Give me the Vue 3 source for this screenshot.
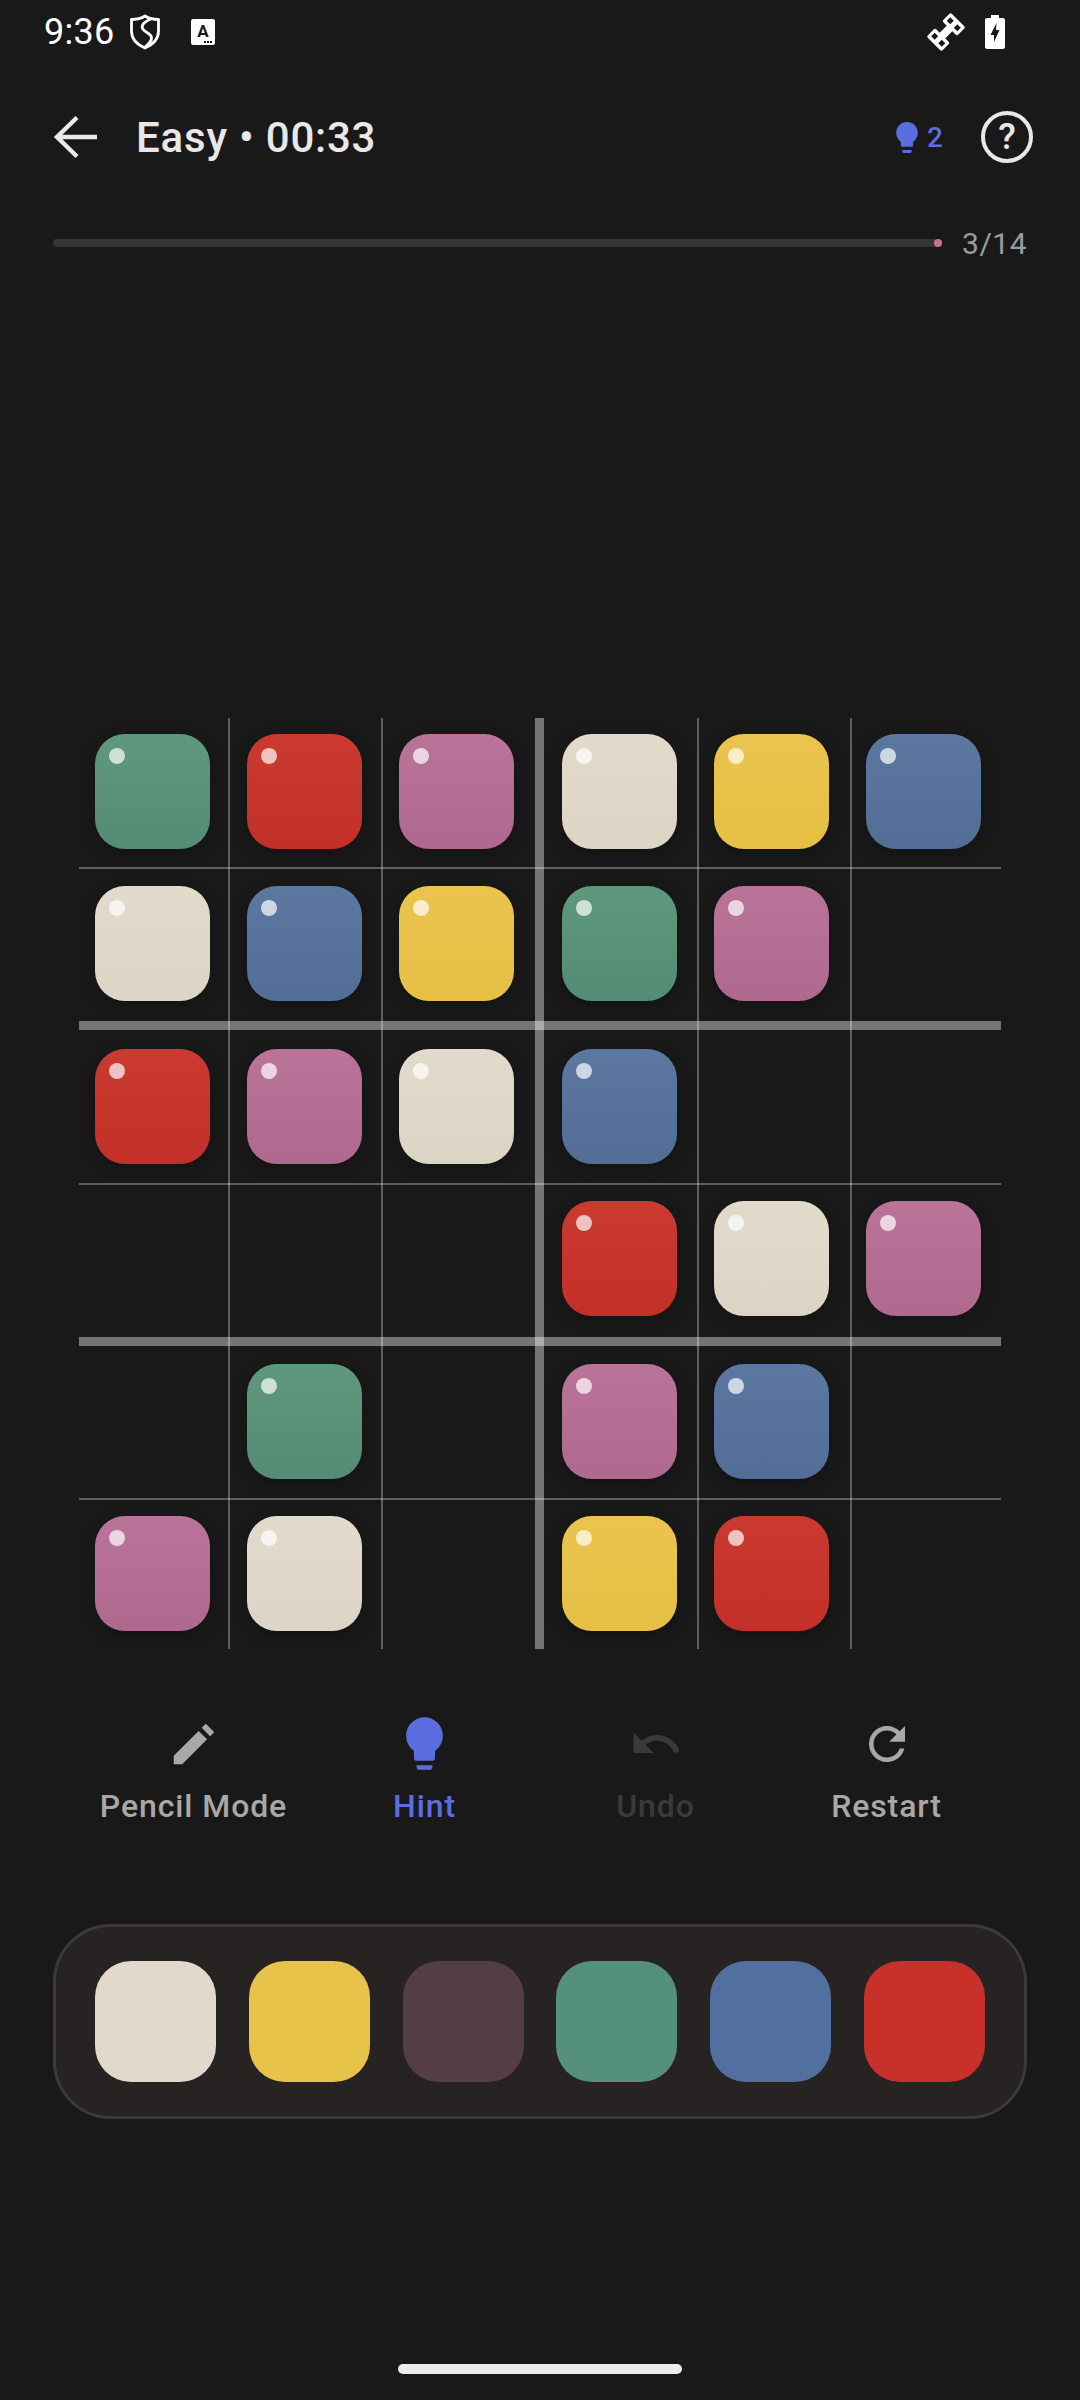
<script setup>
const colors = { G: 'green', R: 'red', P: 'pink', C: 'cream', Y: 'yellow', B: 'blue' }
const board = ['GRPCYB', 'CBYGP_', 'RPCB__', '___RCP', '_G_PB_', 'PC_YR_']
const colOffset = [16, 17, 16, 18, 15, 14]
const rowOffset = [16, 17, 19, 16, 18, 16]
const tiles = []
board.forEach((row, r) => {
  row.split('').forEach((c, k) => {
    if (c !== '_') {
      tiles.push({
        id: r + '-' + k,
        color: colors[c],
        style: {
          gridColumn: k * 2 + 1,
          gridRow: r * 2 + 1,
          marginLeft: colOffset[k] + 'px',
          marginTop: rowOffset[r] + 'px'
        }
      })
    }
  })
})
const vLines = [
  { col: 2, thick: false },
  { col: 4, thick: false },
  { col: 6, thick: true },
  { col: 8, thick: false },
  { col: 10, thick: false }
]
const hLines = [
  { row: 2, thick: false },
  { row: 4, thick: true },
  { row: 6, thick: false },
  { row: 8, thick: true },
  { row: 10, thick: false }
]
const palette = ['cream', 'yellow', 'dim', 'green', 'blue', 'red']
</script>

<template>
  <div class="page">
    <div class="status">
      <div class="status-left">
        <span class="time">9:36</span>
        <svg class="shield" width="32" height="36" viewBox="0 0 32 36">
          <path d="M16 2 C20 4.500 25 5.500 29.500 5.500 V17 C29.500 25 24 30.500 16 34 C8 30.500 2.500 25 2.500 17 V5.500 C7 5.500 12 4.500 16 2 Z" fill="none" stroke="#fff" stroke-width="2.800" stroke-linejoin="round" />
          <path d="M23 4.500 C16 7 12 10.500 13.500 14.500 C15 18.500 22 19 22.500 23.500 C22.800 27 20 30 16 33" fill="none" stroke="#fff" stroke-width="2.800" />
        </svg>
        <span class="kbd">A<i class="kbd-dots"></i></span>
      </div>
      <div class="status-right">
        <svg class="sat" width="38" height="38" viewBox="0 0 38 38">
          <g transform="rotate(-45 19 19)">
            <rect x="2" y="8.500" width="12" height="21" rx="2" fill="#fff" />
            <rect x="24" y="8.500" width="12" height="21" rx="2" fill="#fff" />
            <rect x="13" y="15" width="12" height="8" fill="#fff" />
            <rect x="5.500" y="11.500" width="5" height="5" fill="#1a1919" />
            <rect x="5.500" y="21.500" width="5" height="5" fill="#1a1919" />
            <rect x="27.500" y="11.500" width="5" height="5" fill="#1a1919" />
            <rect x="27.500" y="21.500" width="5" height="5" fill="#1a1919" />
          </g>
        </svg>
        <svg class="bat" width="20" height="34" viewBox="0 0 20 34">
          <path d="M6 0 H14 V3 H18 C19 3 20 4 20 5 V32 C20 33 19 34 18 34 H2 C1 34 0 33 0 32 V5 C0 4 1 3 2 3 H6 Z" fill="#fff" />
          <path d="M11.500 8 L5.500 20 H9 V27 L14.500 15 H11 Z" fill="#1a1919" />
        </svg>
      </div>
    </div>

    <header class="header">
      <svg class="back" width="48" height="48" viewBox="0 0 48 48">
        <path d="M46 24 H6 M26 4.500 L6 24 L26 43.500" fill="none" stroke="#eaeaea" stroke-width="4.400" />
      </svg>
      <span class="title">Easy • 00:33</span>
      <span class="hints">
        <svg width="32" height="32" viewBox="5 2 14 20" class="hint-bulb">
          <path fill="#5b6ee1" d="M9 21c0 .55.45 1 1 1h4c.55 0 1-.45 1-1v-1H9v1zm3-19C8.140 2 5 5.140 5 9c0 2.380 1.190 4.470 3 5.740V17c0 .55.45 1 1 1h6c.55 0 1-.45 1-1v-2.260c1.810-1.270 3-3.360 3-5.740 0-3.860-3.140-7-7-7z" />
        </svg>
        <span class="hint-count">2</span>
      </span>
      <span class="help">?</span>
    </header>

    <div class="progress">
      <div class="track"><i class="track-dot"></i></div>
      <span class="count">3/14</span>
    </div>

    <div class="board">
      <i v-for="l in vLines" :key="'v' + l.col" class="vline" :class="{ thick: l.thick }" :style="{ gridColumn: l.col }"></i>
      <i v-for="l in hLines" :key="'h' + l.row" class="hline" :class="{ thick: l.thick }" :style="{ gridRow: l.row }"></i>
      <div v-for="t in tiles" :key="t.id" class="tile" :class="t.color" :style="t.style"></div>
    </div>

    <div class="actions">
      <div class="action">
        <svg class="icon" viewBox="0 0 24 24"><path fill="#a8a8a6" d="M3 17.250V21h3.750L17.810 9.940l-3.750-3.750L3 17.250zM21 6.750 17.250 3l-1.830 1.830 3.750 3.750L21 6.750z" /></svg>
        <span class="label">Pencil Mode</span>
      </div>
      <div class="action active">
        <svg class="icon bulb" viewBox="0 0 24 24"><path fill="#5b6ee1" d="M9 20.300V21c0 .55.45 1 1 1h4c.55 0 1-.45 1-1v-.7H9zm3-18.300C8.140 2 5 5.140 5 9c0 2.380 1.190 4.470 3 5.740V17.600c0 .55.45 1 1 1h6c.55 0 1-.45 1-1v-2.860c1.810-1.270 3-3.360 3-5.740 0-3.860-3.140-7-7-7z" /></svg>
        <span class="label">Hint</span>
      </div>
      <div class="action disabled">
        <svg class="icon" viewBox="0 0 24 24"><path fill="#3a3a3a" d="M12.500 8c-2.650 0-5.050.99-6.900 2.600L2 7v9h9l-3.620-3.620c1.390-1.160 3.160-1.880 5.120-1.880 3.540 0 6.550 2.310 7.600 5.500l2.370-.78C21.080 11.030 17.150 8 12.500 8z" /></svg>
        <span class="label">Undo</span>
      </div>
      <div class="action">
        <svg class="icon" viewBox="0 0 24 24"><path fill="#a8a8a6" d="M17.650 6.350C16.200 4.900 14.210 4 12 4c-4.420 0-7.990 3.580-7.990 8s3.570 8 7.990 8c3.730 0 6.840-2.550 7.730-6h-2.080c-.82 2.330-3.040 4-5.650 4-3.310 0-6-2.690-6-6s2.690-6 6-6c1.660 0 3.140.69 4.220 1.780L13 11h7V4l-2.350 2.350z" /></svg>
        <span class="label">Restart</span>
      </div>
    </div>

    <div class="panel">
      <div v-for="p in palette" :key="p" class="swatch" :class="'s-' + p"></div>
    </div>

    <div class="home"></div>
  </div>
</template>

<style>
html, body { margin: 0; background: #1a1919; }
</style>

<style scoped>
.page {
  width: 1080px;
  height: 2400px;
  background: #1a1919;
  font-family: Roboto, "Noto Sans", sans-serif;
  overflow: hidden;
}
.status {
  height: 64px;
  padding: 0 75px 0 44px;
  display: flex;
  justify-content: space-between;
  align-items: center;
}
.status-left, .status-right { display: flex; align-items: center; }
.time { font-size: 36px; color: #fff; width: 85px; letter-spacing: 0.3px; }
.kbd {
  position: relative;
  margin-left: 30px;
  width: 24px;
  height: 26px;
  border-radius: 2px;
  background: #fff;
  color: #1a1919;
  font-size: 17px;
  font-weight: 700;
  line-height: 24px;
  text-align: center;
}
.kbd-dots {
  position: absolute;
  right: 3px;
  bottom: 2px;
  width: 2px;
  height: 2px;
  background: #1a1919;
  box-shadow: -3px 0 #1a1919, -6px 0 #1a1919;
}
.bat { margin-left: 20px; }
.header {
  margin-top: 31px;
  height: 84px;
  padding: 0 47px 0 53px;
  display: flex;
  align-items: center;
}
.back { margin-right: 37px; margin-left: -2px; }
.title {
  flex: 1;
  font-size: 42px;
  font-weight: 500;
  color: #e8e8e8;
  letter-spacing: 0.8px;
}
.hints { display: flex; align-items: center; margin-right: 38px; }
.hint-bulb { width: 22px; height: 31px; margin-right: 9px; }
.hint-count { font-size: 28px; font-weight: 500; color: #5b6ee1; }
.help {
  width: 52px;
  height: 52px;
  box-sizing: border-box;
  border: 4px solid #e8e8e8;
  border-radius: 50%;
  color: #e8e8e8;
  font-size: 36px;
  font-weight: 500;
  line-height: 44px;
  text-align: center;
}
.progress {
  margin-top: 44px;
  height: 40px;
  padding: 0 53px;
  display: flex;
  align-items: center;
}
.track {
  position: relative;
  width: 891px;
  height: 8px;
  border-radius: 4px;
  background: #353535;
}
.track-dot {
  position: absolute;
  right: 0;
  top: 0;
  width: 8px;
  height: 8px;
  border-radius: 50%;
  background: #c0749a;
}
.count {
  margin-left: 20px;
  font-size: 30px;
  color: #9c9c9c;
  letter-spacing: 0.5px;
}
.board {
  margin: 455px 0 0 79px;
  width: 922px;
  height: 931px;
  display: grid;
  grid-template-columns: 149px 2px 151px 2px 152px 9px 153px 2px 151px 2px 149px;
  grid-template-rows: 149px 2px 152px 9px 153px 2px 152px 9px 152px 2px 149px;
}
.vline { grid-row: 1 / -1; background: rgba(255, 255, 255, 0.3); }
.hline { grid-column: 1 / -1; background: rgba(255, 255, 255, 0.3); }
.vline.thick, .hline.thick { background: rgba(255, 255, 255, 0.4); }
.tile {
  position: relative;
  width: 115px;
  height: 115px;
  border-radius: 30px;
  box-shadow: 0 4px 14px rgba(0, 0, 0, 0.25);
}
.tile::before {
  content: "";
  position: absolute;
  left: 14px;
  top: 14px;
  width: 16px;
  height: 16px;
  border-radius: 50%;
  background: rgba(255, 255, 255, 0.7);
}
.green { background: linear-gradient(#5f977f, #548b74); }
.red { background: linear-gradient(#cb3a2f, #c23029); }
.pink { background: linear-gradient(#ba749a, #af688e); }
.cream { background: linear-gradient(#e2dbcc, #dcd5c5); }
.blue { background: linear-gradient(#5c78a1, #526e97); }
.yellow { background: linear-gradient(#eac44e, #e6bf44); }
.actions {
  margin: 68px 0 0 78px;
  width: 924px;
  height: 113px;
  display: grid;
  grid-template-columns: repeat(4, 1fr);
}
.action {
  display: flex;
  flex-direction: column;
  align-items: center;
  color: #a8a8a6;
}
.icon { display: block; width: 54px; height: 54px; }
.icon.bulb { width: 63px; height: 63px; margin: -5px 0 -4px; }
.label {
  margin-top: 17px;
  font-size: 32px;
  line-height: 36px;
  font-weight: 500;
  letter-spacing: 0.9px;
}
.action.active { color: #5b6ee1; }
.action.disabled { color: #3a3a3a; }
.panel {
  margin: 94px 0 0 53px;
  width: 974px;
  height: 195px;
  box-sizing: border-box;
  padding: 34px 39px;
  display: flex;
  justify-content: space-between;
  background: #262322;
  border: 3px solid #3c3a39;
  border-radius: 58px;
}
.swatch { width: 121px; height: 121px; border-radius: 36px; }
.s-cream { background: #e2d9cc; }
.s-yellow { background: #e8c349; }
.s-dim { background: #553d44; }
.s-green { background: #55907a; }
.s-blue { background: #51709f; }
.s-red { background: #c8312a; }
.home {
  margin: 245px 0 0 398px;
  width: 284px;
  height: 10px;
  border-radius: 5px;
  background: #ececea;
}
</style>
